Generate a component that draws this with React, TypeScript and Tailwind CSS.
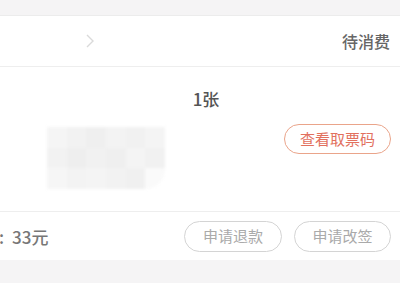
import React from "react";

const font = { fontFamily: '"Noto Sans CJK SC", "Noto Sans", sans-serif' };

export default function App() {
  return (
    <div className="w-[400px] h-[300px] overflow-hidden bg-white" style={font}>
      <div className="h-[16px] bg-[#f5f4f5] border-b border-[#ececec]" />
      <div className="h-[51px] flex items-center justify-between border-b border-[#eeeeee] pr-[10px]">
        <svg width="10" height="16" viewBox="0 0 10 16" className="ml-[85px]">
          <path d="M2 2 L8 8 L2 14" fill="none" stroke="#dadada" strokeWidth="1.4" />
        </svg>
        <span className="text-[16px] leading-none text-[#666666] font-medium">待消费</span>
      </div>
      <div className="h-[145px] border-b border-[#eeeeee] relative flex flex-col">
        <div className="pt-[23px] text-center pl-[12px] text-[17px] leading-none font-medium text-[#555555]">1张</div>
        <div className="flex justify-between items-start pr-[9px]">
          <div className="ml-[47px] mt-[20px] w-[118px] h-[62px] grid grid-cols-6 grid-rows-3 blur-[1.5px]">
            <div className="bg-[#f5f5f5]" /><div className="bg-[#f2f2f2]" /><div className="bg-[#efefef]" /><div className="bg-[#f3f3f3]" /><div className="bg-[#f1f1f1]" /><div className="bg-[#f4f4f4]" />
            <div className="bg-[#f2f2f2]" /><div className="bg-[#eeeeee]" /><div className="bg-[#f1f1f1]" /><div className="bg-[#efefef]" /><div className="bg-[#f4f4f4]" /><div className="bg-[#f1f1f1]" />
            <div className="bg-[#f6f6f6]" /><div className="bg-[#f3f3f3]" /><div className="bg-[#f4f4f4]" /><div className="bg-[#f2f2f2]" /><div className="bg-[#f0f0f0]" /><div className="bg-[#fafafa] rounded-br-[20px]" />
          </div>
          <div className="mt-[17px] w-[107px] h-[30px] rounded-full border-[1.5px] border-[#eaa48a] flex items-center justify-center text-[15px] text-[#e2705e]">
            查看取票码
          </div>
        </div>
      </div>
      <div className="h-[48px] flex items-center justify-between pr-[9px]">
        <div className="flex items-center -ml-[1px] text-[17px] leading-none text-[#777777] font-medium">
          <span>:</span>
          <span className="ml-[8px]">33元</span>
        </div>
        <div className="flex gap-[12px]">
          <div className="w-[98px] h-[31px] rounded-full border-[1.5px] border-[#d4d4d4] flex items-center justify-center text-[15px] text-[#aaaaaa]">申请退款</div>
          <div className="w-[97px] h-[31px] rounded-full border-[1.5px] border-[#d4d4d4] flex items-center justify-center text-[15px] text-[#aaaaaa]">申请改签</div>
        </div>
      </div>
      <div className="h-[23px] bg-[#f5f4f5]" />
      <div className="h-[17px] bg-white" />
    </div>
  );
}
